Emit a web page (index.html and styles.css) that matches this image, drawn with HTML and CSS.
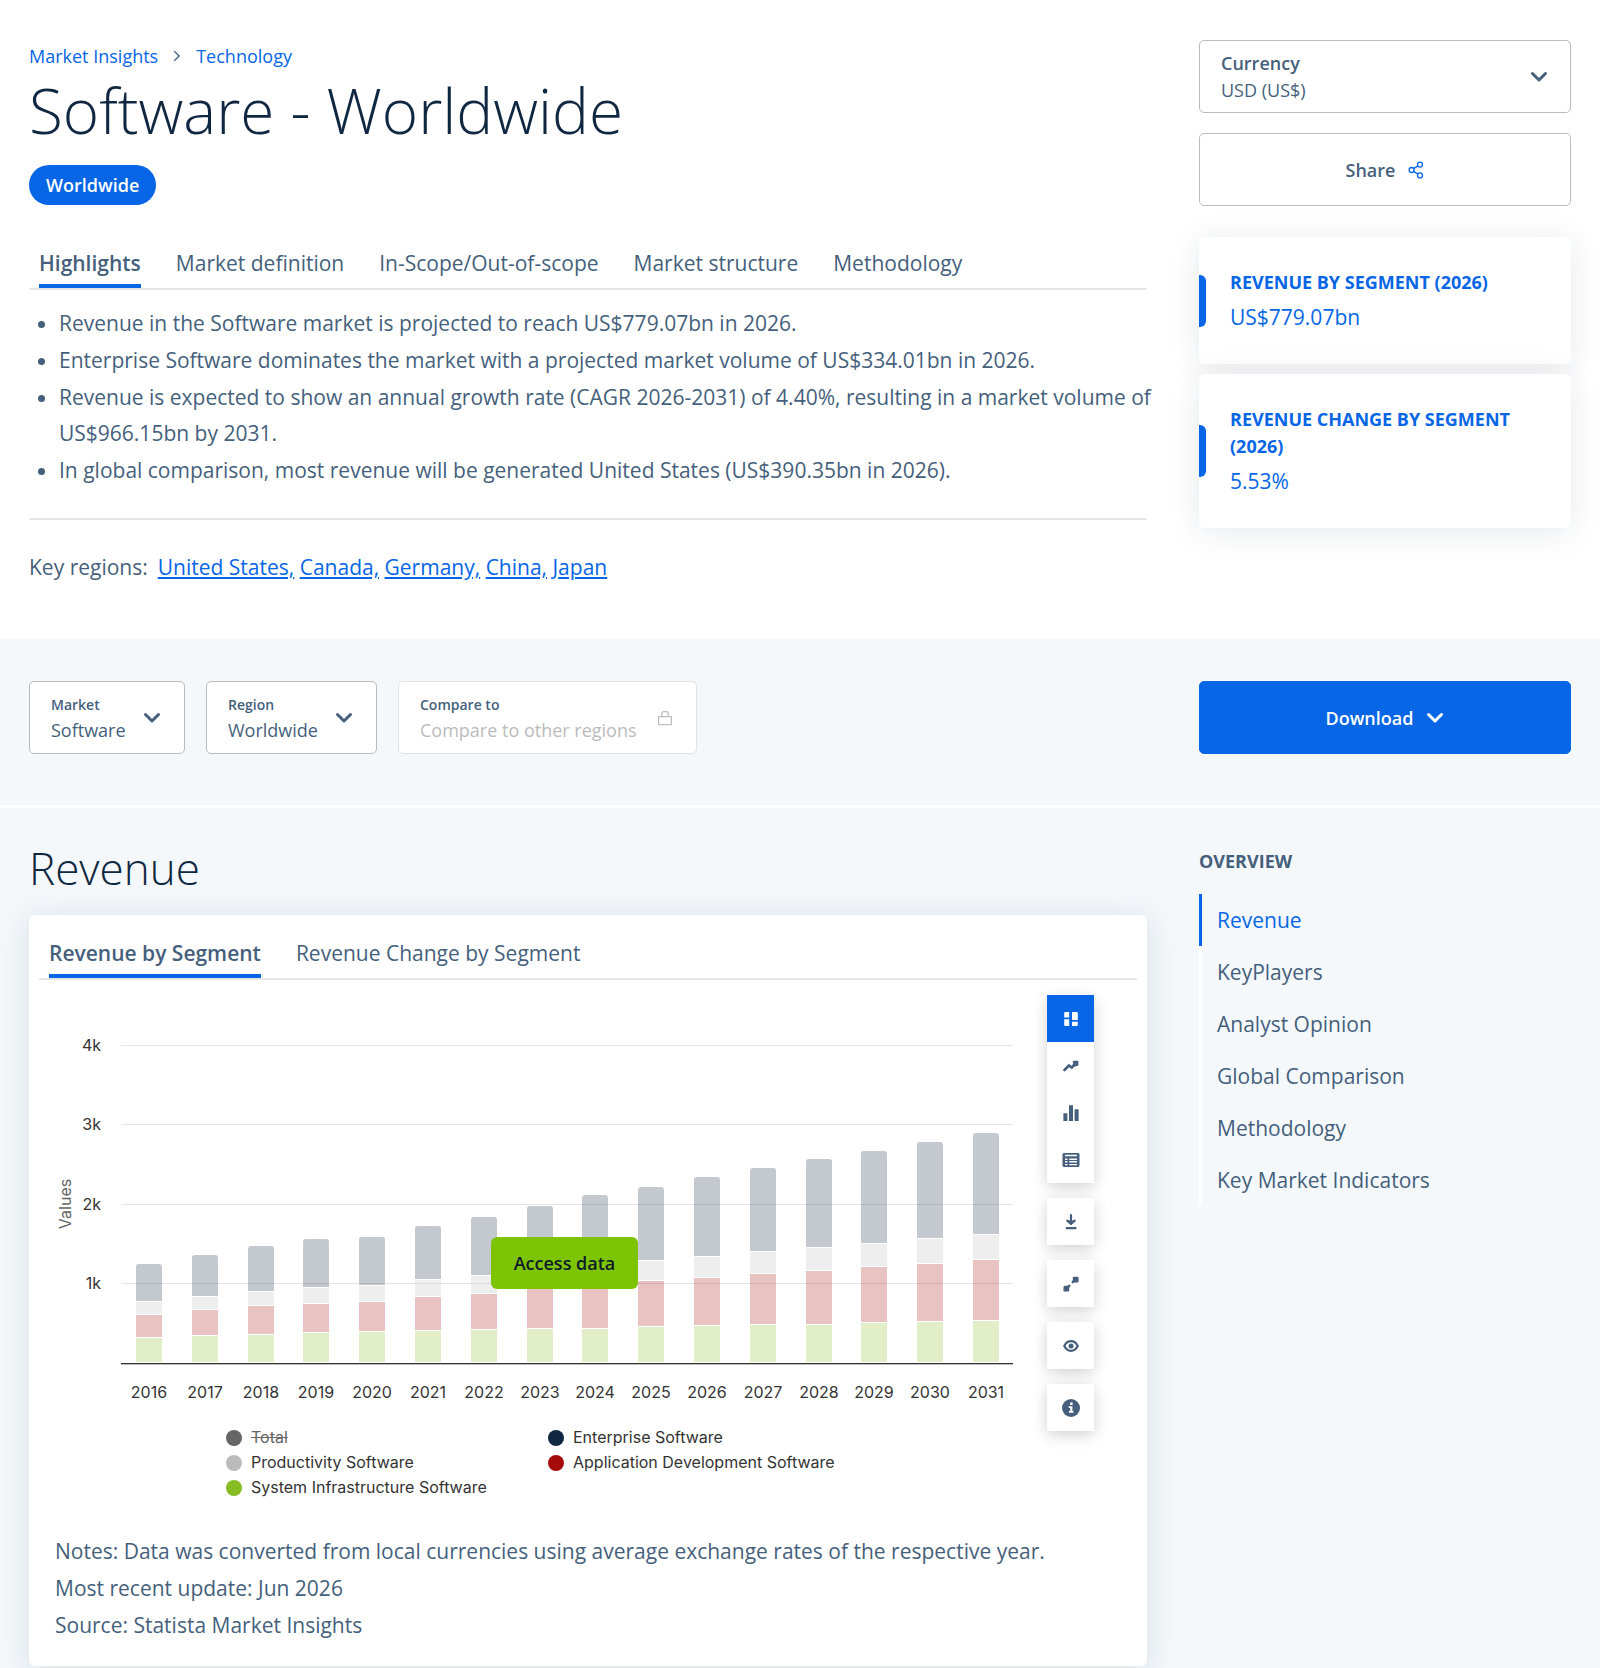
FILE: index.html
```
<!DOCTYPE html>
<html lang="en">
<head>
<meta charset="utf-8">
<meta name="viewport" content="width=device-width, initial-scale=1">
<title>Software - Worldwide</title>
<link rel="stylesheet" href="styles.css">
</head>
<body>
<header class="intro columns">
  <div class="main-col">
    <nav class="breadcrumb" aria-label="Breadcrumb">
      <a href="#">Market Insights</a>
      <svg width="8" height="12" viewBox="0 0 8 12" aria-hidden="true"><path d="M1.5 1.5 6.3 6 1.5 10.5" fill="none" stroke="currentColor" stroke-width="1.3" stroke-linecap="round" stroke-linejoin="round"/></svg>
      <a href="#">Technology</a>
    </nav>
    <h1>Software - Worldwide</h1>
    <span class="badge">Worldwide</span>
    <div class="tabs" role="tablist">
      <button class="tab active" role="tab" aria-selected="true">Highlights</button>
      <button class="tab" role="tab">Market definition</button>
      <button class="tab" role="tab">In-Scope/Out-of-scope</button>
      <button class="tab" role="tab">Market structure</button>
      <button class="tab" role="tab">Methodology</button>
    </div>
    <ul class="highlights">
      <li>Revenue in the Software market is projected to reach US$779.07bn in 2026.</li>
      <li>Enterprise Software dominates the market with a projected market volume of US$334.01bn in 2026.</li>
      <li>Revenue is expected to show an annual growth rate (CAGR 2026-2031) of 4.40%, resulting in a market volume of US$966.15bn by 2031.</li>
      <li>In global comparison, most revenue will be generated United States (US$390.35bn in 2026).</li>
    </ul>
    <p class="regions"><span class="regions-label">Key regions:</span><a href="#">United States,</a> <a href="#">Canada,</a> <a href="#">Germany,</a> <a href="#">China,</a> <a href="#">Japan</a></p>
  </div>
  <aside class="side-col">
    <div class="field field-wide">
      <label for="currency">Currency</label>
      <select id="currency"><option>USD (US$)</option></select>
      <svg class="chevron" width="18" height="12" viewBox="0 0 18 12" aria-hidden="true"><path d="M2.5 2.5 9 9l6.5-6.5"/></svg>
    </div>
    <button class="share">Share
      <svg class="outline" width="16" height="18" viewBox="0 0 16 18" stroke="currentColor" stroke-width="1.3" aria-hidden="true"><circle cx="3.6" cy="9" r="2.5"/><circle cx="12" cy="3.6" r="2.500"/><circle cx="12" cy="14.400" r="2.500"/><path d="m5.700 7.600 4.200-2.700M5.700 10.400l4.200 2.700"/></svg>
    </button>
    <section class="stat"><h2>Revenue by Segment (2026)</h2><p>US$779.07bn</p></section>
    <section class="stat"><h2>Revenue Change by Segment (2026)</h2><p>5.53%</p></section>
  </aside>
</header>

<section class="filters columns">
  <div class="main-col filter-row">
    <div class="field">
      <label for="market">Market</label>
      <select id="market"><option>Software</option></select>
      <svg class="chevron" width="18" height="12" viewBox="0 0 18 12" aria-hidden="true"><path d="M2.500 2.500 9 9l6.500-6.500"/></svg>
    </div>
    <div class="field">
      <label for="region">Region</label>
      <select id="region"><option>Worldwide</option></select>
      <svg class="chevron" width="18" height="12" viewBox="0 0 18 12" aria-hidden="true"><path d="M2.500 2.500 9 9l6.500-6.500"/></svg>
    </div>
    <div class="field locked">
      <label for="compare">Compare to</label>
      <select id="compare" disabled><option>Compare to other regions</option></select>
      <svg class="outline lock" width="16" height="16" viewBox="0 0 16 16" stroke="currentColor" stroke-width="1.200" aria-hidden="true"><rect x="1.600" y="6.600" width="12.800" height="8"/><path d="M4.800 6.500V3.600a2 2 0 0 1 2-2h2.400a2 2 0 0 1 2 2v2.900"/></svg>
    </div>
  </div>
  <div class="side-col">
    <button class="download">Download
      <svg class="chevron" width="18" height="12" viewBox="0 0 18 12" aria-hidden="true"><path d="M2.500 2.500 9 9l6.500-6.500"/></svg>
    </button>
  </div>
</section>

<main class="content columns">
  <section class="main-col">
    <h2 class="heading">Revenue</h2>
    <article class="card">
      <div class="tabs" role="tablist">
        <button class="tab active" role="tab" aria-selected="true">Revenue by Segment</button>
        <button class="tab" role="tab">Revenue Change by Segment</button>
      </div>
      <div class="chart-row">
        <div class="chart">
          <svg class="plot" viewBox="0 1 1008 431" role="img" aria-label="Revenue by segment, 2016 to 2031">
            <g id="grid" class="grid"></g>
            <g id="bars"></g>
            <path class="axis" d="M82 384.500H974"/>
            <path class="axis-shade" d="M82 385.500H974"/>
            <g id="ticks" class="ticks"></g>
            <text class="axis-title" transform="translate(32 225) rotate(-90)">Values</text>
          </svg>
          <button class="access">Access data</button>
          <ul class="legend">
            <li class="off"><i class="dot total"></i><span>Total</span></li>
            <li><i class="dot enterprise"></i>Enterprise Software</li>
            <li><i class="dot productivity"></i>Productivity Software</li>
            <li><i class="dot application"></i>Application Development Software</li>
            <li><i class="dot system"></i>System Infrastructure Software</li>
          </ul>
        </div>
        <div class="tools">
          <div class="tool-group">
            <button class="tool on" aria-label="Stacked chart"><svg width="16" height="16" viewBox="0 0 16 16"><path d="M2 1h4.200v5.500H1.200V1.800zM9 1h5l.8.800V9H9zM1.200 8.300h5V15H2l-.8-.8zM9 10.800h5.800v3.400L14 15H9z"/></svg></button>
            <button class="tool" aria-label="Line chart"><svg width="16" height="16" viewBox="0 0 16 16"><path d="M1.500 12 6 7.500 8.800 9.500 12 6" fill="none" stroke="currentColor" stroke-width="2.600" stroke-linecap="round"/><path d="M9.600 3.600 11 2.800h4.400v4.800L13 8.200l-1.600.5-1-2z"/></svg></button>
            <button class="tool" aria-label="Bar chart"><svg width="16" height="16" viewBox="0 0 16 16"><path d="M.4 8.300h4V16h-4zM6 .3h4V16H6zm5.600 4h4V16h-4z"/></svg></button>
            <button class="tool" aria-label="Table"><svg width="18" height="16" viewBox="0 0 18 16"><path fill-rule="evenodd" d="M1.500 1h15l1 1v12l-1 1h-15l-1-1V2zM3 2.700v1.600h12V2.700zM3 6.500v1.600h2.500V6.500zm4.300 0v1.600H15V6.500zM3 9.100v1.400h2.500V9.100zm4.300 0v1.400H15V9.100zM3 11.900v1.400h2.500v-1.400zm4.300 0v1.400H15v-1.400z"/></svg></button>
          </div>
          <button class="tool" aria-label="Download"><svg width="16" height="16" viewBox="0 0 16 16"><path d="M8 1.200V9M4.300 6.700 8 9.800l3.700-3.100" fill="none" stroke="currentColor" stroke-width="2.200" stroke-linecap="round"/><path d="M3.500 6.500h9L8 11zM2.800 13h10.600v2.200H2.800z"/></svg></button>
          <button class="tool" aria-label="Full screen"><svg width="16" height="16" viewBox="0 0 16 16"><path d="m9.800 6.200 2-2M6.200 9.800l-2 2" stroke="currentColor" stroke-width="2.600" stroke-linecap="round"/><path d="m9.800 1.600.8-.8h4.400l.6.600v4.400l-1 .6H11l-1.200-1.600zM.6 10.400l.8-.7H5l1.200 1.500v3.400l-.7.800H1l-.6-.6z"/></svg></button>
          <button class="tool" aria-label="Show"><svg width="16" height="16" viewBox="0 0 16 16"><path d="M1.300 8C3 4.600 5.300 3.200 8 3.200S13 4.600 14.700 8C13 11.400 10.700 12.800 8 12.800S3 11.400 1.300 8z" fill="none" stroke="currentColor" stroke-width="2.200"/><circle cx="8" cy="8" r="2.500"/></svg></button>
          <button class="tool" aria-label="Info"><svg width="18" height="18" viewBox="0 0 18 18"><circle cx="9" cy="9" r="9"/><path d="M8.200 3.600h2.400v2.300H8.200zM6.700 7.300h3.700v4.600h1v1.800H6.900v-1.800h1.300V9.100H6.700z" fill="#fff"/></svg></button>
        </div>
      </div>
      <div class="notes">
        <p>Notes: Data was converted from local currencies using average exchange rates of the respective year.</p>
        <p>Most recent update: Jun 2026</p>
        <p>Source: Statista Market Insights</p>
      </div>
    </article>
  </section>
  <aside class="side-col">
    <nav class="overview" aria-labelledby="overview-title">
      <h3 id="overview-title">Overview</h3>
      <a class="current" href="#">Revenue</a>
      <a href="#">KeyPlayers</a>
      <a href="#">Analyst Opinion</a>
      <a href="#">Global Comparison</a>
      <a href="#">Methodology</a>
      <a href="#">Key Market Indicators</a>
    </nav>
  </aside>
</main>
<script src="chart.js"></script>
</body>
</html>
```
FILE: chart.js
```
const NS = 'http://www.w3.org/2000/svg';
const BASE = 384;

function add(parent, name, attrs, text) {
  const el = document.createElementNS(NS, name);
  for (const key in attrs) el.setAttribute(key, attrs[key]);
  if (text) el.textContent = text;
  document.getElementById(parent).appendChild(el);
}

// Segment heights per year, bottom up: system, application, productivity, enterprise
const data = [
  [2016, 25, 23, 13, 38], [2017, 27, 26, 13, 42], [2018, 28, 29, 14, 46],
  [2019, 30, 29, 16, 49], [2020, 31, 30, 16, 49], [2021, 32, 34, 17, 54],
  [2022, 33, 36, 18, 59], [2023, 34, 40, 18, 65], [2024, 34, 43, 20, 71],
  [2025, 36, 46, 20, 74], [2026, 37, 48, 21, 80], [2027, 38, 51, 22, 84],
  [2028, 38, 54, 23, 89], [2029, 40, 56, 23, 93], [2030, 41, 58, 25, 97],
  [2031, 42, 61, 25, 102]
];
const fills = ['#87bc24', '#a60b0b', '#bbbbbb', '#0f2741'];

['1k', '2k', '3k', '4k'].forEach((label, i) => {
  const y = [304, 225, 145, 66][i];
  add('grid', 'rect', { x: 82, y, width: 892, height: 1 });
  add('ticks', 'text', { x: 62, y: y + 6, 'text-anchor': 'end' }, label);
});

data.forEach(([year, ...parts], i) => {
  const x = 97 + Math.round(i * 55.8);
  let y = BASE;
  parts.forEach((h, s) => {
    y -= h;
    const attrs = { fill: fills[s], 'fill-opacity': 0.25 };
    if (s === 3) {
      add('bars', 'path', { ...attrs, d: `M${x} ${y + h - 1}v${4 - h}q0-3 3-3h20q3 0 3 3v${h - 4}z` });
    } else {
      add('bars', 'rect', { ...attrs, x, y, width: 26, height: h - 1 });
    }
  });
  add('ticks', 'text', { x: x + 13, y: 419, 'text-anchor': 'middle' }, String(year));
});
```
FILE: styles.css
```
* { box-sizing: border-box; }

body {
  margin: 0;
  background: #fff;
  color: #455f7c;
  font: 21px/36px "Open Sans", sans-serif;
}

h1, h2, h3, p, ul { margin: 0; padding: 0; }
ul { list-style: none; }
a { color: #0666e5; }
button, select { font: inherit; color: inherit; margin: 0; }
button { cursor: pointer; }
svg { display: block; fill: currentColor; }
.outline { fill: none; }

.columns {
  display: grid;
  grid-template-columns: minmax(0, 1fr) 372px;
  column-gap: 52px;
  padding: 0 29px;
}

.intro { padding-top: 40px; padding-bottom: 54px; }

.breadcrumb {
  display: flex;
  align-items: center;
  gap: 15px;
  height: 31px;
  font-size: 18px;
}
.breadcrumb a { text-decoration: none; }

h1, .heading { color: #0f2741; font-weight: 300; }
h1 { font-size: 62px; line-height: 78px; }

.badge {
  display: inline-block;
  margin: 16px 0 0;
  padding: 0 17px;
  border-radius: 20px;
  background: #0666e5;
  color: #fff;
  font-size: 18px;
  font-weight: 600;
  line-height: 40px;
}

.tabs {
  display: flex;
  gap: 35px;
  border-bottom: 2px solid #e4e6e8;
  padding: 0 10px;
}
.intro .tabs { margin-top: 30px; }
.tab {
  height: 53px;
  padding: 6px 0 0;
  border: 0;
  border-bottom: 4px solid transparent;
  background: none;
}
.tab.active { border-color: #0666e5; font-weight: 600; }

.highlights {
  display: grid;
  row-gap: 1px;
  margin-top: 15px;
  padding: 0 0 30px 30px;
  border-bottom: 2px solid #e4e6e8;
  list-style: disc;
}
.highlights li { margin-right: -8px; }
.regions { margin-top: 29px; }
.regions-label { margin-right: 10px; }

.field {
  display: grid;
  grid-template-columns: auto auto;
  align-items: center;
  align-content: center;
  column-gap: 17px;
  height: 73px;
  padding: 0 23px 0 21px;
  border: 1px solid #bbb;
  border-radius: 5px;
  background: #fff;
  font-size: 18px;
  line-height: 26px;
}
.field label { font-size: 14px; font-weight: 600; line-height: 24px; }
.field select {
  grid-row: 2;
  min-width: 0;
  height: 26px;
  padding: 0;
  border: 0;
  background: none;
  appearance: none;
}
.field svg { grid-row: 1 / 3; grid-column: 2; }
.field-wide { grid-template-columns: 1fr auto; padding-right: 22px; }
.field-wide label { font-size: 18px; line-height: 27px; }
.locked { column-gap: 20px; border-color: #e2e2e2; }
.locked select { color: #bbb; opacity: 1; }
.lock { color: #bbb; }
.chevron path {
  fill: none;
  stroke: currentColor;
  stroke-width: 3;
  stroke-linecap: round;
  stroke-linejoin: round;
}

.share, .download {
  display: flex;
  align-items: center;
  justify-content: center;
  gap: 13px;
  width: 100%;
  height: 73px;
  border: 1px solid #bbb;
  border-radius: 5px;
  background: #fff;
  font-size: 18px;
  font-weight: 600;
}
.share { margin-top: 20px; }
.share svg { color: #0666e5; }
.download { border-color: #0666e5; background: #0666e5; color: #fff; }

.stat {
  position: relative;
  margin-top: 10px;
  padding: 32px 31px 31px;
  border-radius: 6px;
  background: #fff;
  box-shadow: 0 4px 32px rgba(15, 39, 65, 0.1);
  color: #0666e5;
}
.share + .stat { margin-top: 31px; }
.stat::before {
  content: "";
  position: absolute;
  left: 0;
  top: calc(50% - 26px);
  width: 7px;
  height: 52px;
  border-radius: 0 6px 6px 0;
  background: #0666e5;
}
.stat h2 { font-size: 18px; font-weight: 700; line-height: 27px; text-transform: uppercase; }
.stat p { margin-top: 6px; line-height: 31px; }

.filters { padding-top: 42px; padding-bottom: 51px; background: #f4f8fb; border-bottom: 3px solid #fff; }
.filter-row { display: flex; gap: 21px; }

.content { background: #f4f8fb; padding-bottom: 52px; }
.heading { margin-top: 30px; font-size: 44px; line-height: 60px; }

.card {
  margin-top: 17px;
  padding: 10px 10px 23px;
  border-radius: 6px;
  background: #fff;
  box-shadow: 0 4px 32px rgba(15, 39, 65, 0.12);
}
.chart-row { display: flex; }
.chart { position: relative; flex: 1; }
.plot { width: 100%; font: 16px Inter, sans-serif; }
.grid { fill: #e3e4e6; }
.axis { stroke: #333; }
.axis-shade { stroke: #bbb; }
.ticks { fill: #333; }
.axis-title { fill: #666; text-anchor: middle; }
.access {
  position: absolute;
  left: 452px;
  top: 257px;
  width: 147px;
  height: 52px;
  padding: 0;
  border: 0;
  border-radius: 6px;
  background: #7dc504;
  color: #0f1c2b;
  font-size: 18px;
  font-weight: 600;
}

.legend {
  display: grid;
  grid-template-columns: 322px auto;
  justify-content: start;
  margin-top: 14px;
  padding-left: 187px;
  color: #333;
  font: 16px/25px Inter, sans-serif;
}
.legend li { display: flex; align-items: center; gap: 9px; }
.off { color: #666; text-decoration: line-through; }
.dot { width: 16px; height: 16px; border-radius: 50%; }
.total { background: #666; }
.enterprise { background: #0f2741; }
.productivity { background: #bbb; }
.application { background: #a60b0b; }
.system { background: #87bc24; }

.tools { display: grid; align-content: start; row-gap: 15px; margin: 15px 43px 0 0; }
.tool-group { box-shadow: 0 4px 14px rgba(0, 0, 0, 0.18); }
.tool {
  display: grid;
  place-items: center;
  width: 47px;
  height: 47px;
  padding: 0;
  border: 0;
  background: #fff;
}
.tools > .tool { box-shadow: 0 4px 14px rgba(0, 0, 0, 0.18); }
.tool.on { background: #0666e5; color: #fff; }

.notes { display: grid; row-gap: 1px; margin-top: 33px; padding-left: 16px; }

.overview { display: grid; }
.overview h3 {
  margin-top: 40px;
  margin-bottom: 19px;
  font-size: 18px;
  line-height: 27px;
  text-transform: uppercase;
}
.overview a {
  height: 52px;
  padding-left: 15px;
  border-left: 3px solid #fff;
  color: #455f7c;
  line-height: 52px;
  text-decoration: none;
}
.overview .current { border-color: #0666e5; color: #0666e5; }
```
